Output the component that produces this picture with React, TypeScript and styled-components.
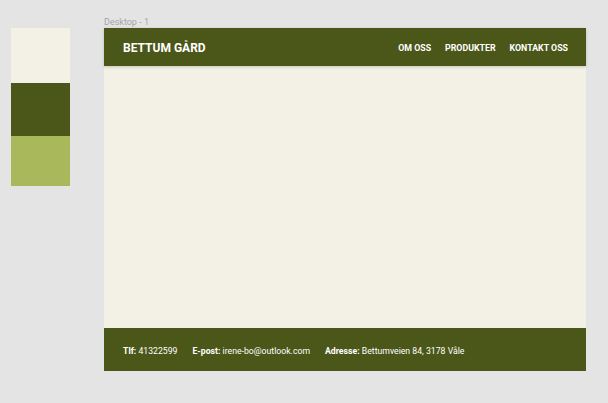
import React from "react";
import styled, { createGlobalStyle } from "styled-components";

const Global = createGlobalStyle`
  html, body { margin: 0; padding: 0; background: #e4e4e4; }
  body { font-family: Roboto, "Liberation Sans", sans-serif; }
`;

const Page = styled.div`
  display: flex;
  align-items: flex-start;
  gap: 34px;
  padding-left: 11px;
  width: 608px;
  height: 403px;
  box-sizing: border-box;
  background: #e4e4e4;
`;

const Swatches = styled.div`
  display: flex;
  flex-direction: column;
  margin-top: 28px;
  width: 59px;
`;

const Swatch = styled.div<{ $color: string; $h: number }>`
  background: ${(p) => p.$color};
  height: ${(p) => p.$h}px;
`;

const FrameColumn = styled.div`
  display: flex;
  flex-direction: column;
`;

const FrameLabel = styled.div`
  padding-top: 16px;
  height: 12px;
  line-height: 12px;
  font-size: 9px;
  color: #a4a4a4;
  font-family: Roboto, "Liberation Sans", sans-serif;
`;

const Frame = styled.div`
  width: 482px;
  height: 343px;
  display: flex;
  flex-direction: column;
  background: #f3f1e6;
`;

const Header = styled.header`
  height: 38px;
  box-sizing: border-box;
  flex: none;
  background: #4b5619;
  display: flex;
  align-items: center;
  justify-content: space-between;
  padding: 2px 18px 0 19px;
  box-shadow: 0 1px 3px rgba(0, 0, 0, 0.18);
  position: relative;
  z-index: 1;
`;

const Brand = styled.div`
  color: #ffffff;
  font-weight: 700;
  font-size: 12px;
`;

const Nav = styled.nav`
  display: flex;
  gap: 14px;
`;

const NavLink = styled.span`
  color: #ffffff;
  font-weight: 700;
  font-size: 8.8px;
`;

const Main = styled.main`
  flex: 1;
`;

const Footer = styled.footer`
  height: 43px;
  box-sizing: border-box;
  flex: none;
  background: #4b5619;
  display: flex;
  align-items: center;
  gap: 15px;
  padding: 2px 19px 0;
  color: #ffffff;
  font-size: 8.7px;
`;

const Item = styled.span``;

const Key = styled.b`
  font-weight: 700;
`;

export default function App() {
  return (
    <>
      <Global />
      <Page>
        <Swatches>
          <Swatch $color="#f3f1e6" $h={55} />
          <Swatch $color="#4b5619" $h={53} />
          <Swatch $color="#a8b85a" $h={50} />
        </Swatches>
        <FrameColumn>
          <FrameLabel>Desktop - 1</FrameLabel>
          <Frame>
            <Header>
              <Brand>BETTUM GÅRD</Brand>
              <Nav>
                <NavLink>OM OSS</NavLink>
                <NavLink>PRODUKTER</NavLink>
                <NavLink>KONTAKT OSS</NavLink>
              </Nav>
            </Header>
            <Main />
            <Footer>
              <Item>
                <Key>Tlf:</Key> 41322599
              </Item>
              <Item>
                <Key>E-post:</Key> irene-bo@outlook.com
              </Item>
              <Item>
                <Key>Adresse:</Key> Bettumveien 84, 3178 Våle
              </Item>
            </Footer>
          </Frame>
        </FrameColumn>
      </Page>
    </>
  );
}
